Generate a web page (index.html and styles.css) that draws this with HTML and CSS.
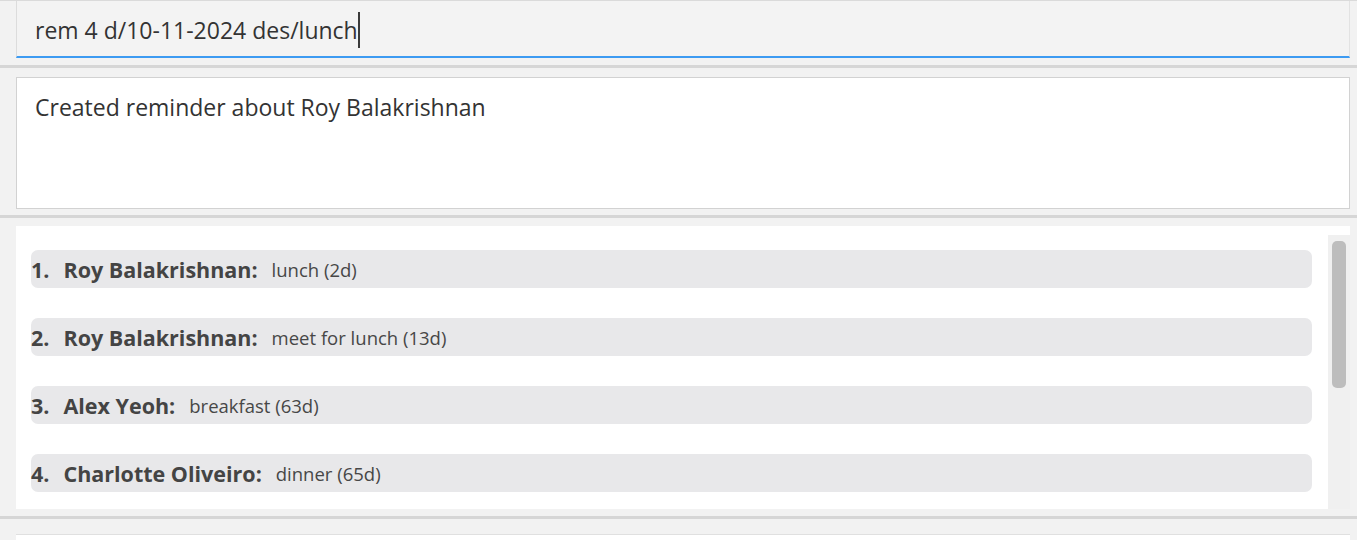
FILE: index.html
```html
<!DOCTYPE html>
<html>
<head>
<meta charset="utf-8">
<link rel="stylesheet" href="styles.css">
</head>
<body>
<div class="app">
  <div class="pane pane-command">
    <div class="command-box"><span class="command-text">rem 4 d/10-11-2024 des/lunch</span><span class="caret"></span></div>
  </div>
  <div class="divider"></div>
  <div class="pane pane-result">
    <div class="result-box">Created reminder about Roy Balakrishnan</div>
  </div>
  <div class="divider"></div>
  <div class="pane pane-list">
    <div class="list-panel">
      <div class="list-items">
        <div class="item"><span class="idx">1.</span><span class="name">Roy Balakrishnan:</span><span class="desc">lunch (2d)</span></div>
        <div class="item"><span class="idx">2.</span><span class="name">Roy Balakrishnan:</span><span class="desc">meet for lunch (13d)</span></div>
        <div class="item"><span class="idx">3.</span><span class="name">Alex Yeoh:</span><span class="desc">breakfast (63d)</span></div>
        <div class="item"><span class="idx">4.</span><span class="name">Charlotte Oliveiro:</span><span class="desc">dinner (65d)</span></div>
      </div>
      <div class="scrollbar"><div class="thumb"></div></div>
    </div>
  </div>
  <div class="divider"></div>
  <div class="pane pane-bottom">
    <div class="bottom-box"></div>
  </div>
</div>
</body>
</html>
```
FILE: styles.css
```css
html, body {
  margin: 0;
  padding: 0;
  background: #f2f2f2;
  height: 540px;
  overflow: hidden;
}
.app {
  display: flex;
  flex-direction: column;
  font-family: "Open Sans", "Noto Sans", sans-serif;
  border-top: 1px solid #dadada;
  height: 539px;
  overflow: hidden;
}
.pane {
  padding: 0 7px 0 16px;
}
.command-box {
  height: 53px;
  background: #f3f3f3;
  border-left: 1px solid #dcdcdc;
  border-right: 1px solid #e2e2e2;
  border-bottom: 2px solid #3d9bf2;
  display: flex;
  align-items: center;
  padding-left: 18px;
  padding-top: 2px;
  font-size: 23px;
  color: #333;
}
.caret {
  display: inline-block;
  width: 2px;
  height: 36px;
  background: #3a3a3a;
}
.pane-command { padding-bottom: 7px; }
.divider {
  height: 3px;
  background: #d6d6d6;
  flex: none;
}
.pane-result { padding-top: 9px; padding-bottom: 6px; }
.result-box {
  background: #fff;
  border: 1px solid #d2d2d2;
  padding: 14px 18px;
  box-sizing: border-box;
  height: 132px;
  font-size: 23px;
  color: #333;
  line-height: 30px;
}
.pane-list { padding-top: 8px; padding-bottom: 7px; }
.list-panel {
  background: #fff;
  height: 283px;
  display: flex;
  padding-left: 15px;
  box-sizing: border-box;
}
.list-items {
  flex: 1;
  display: flex;
  flex-direction: column;
  gap: 30px;
  padding-top: 24px;
  padding-right: 16px;
}
.item {
  height: 38px;
  flex: none;
  background: #e8e8ea;
  border-radius: 7px;
  display: flex;
  align-items: center;
  color: #444;
}
.idx {
  font-weight: 700;
  font-size: 21.5px;
  margin-right: 14px;
}
.name {
  font-weight: 700;
  font-size: 21.5px;
  margin-right: 14px;
}
.desc {
  font-size: 18.5px;
  color: #474747;
}
.scrollbar {
  width: 22px;
  margin-top: 9px;
  background: #f0f0f0;
  padding: 6px 4px 0 4px;
  box-sizing: border-box;
}
.thumb {
  width: 14px;
  height: 147px;
  background: #bdbdbd;
  border-radius: 5px;
}
.pane-bottom { padding-top: 15px; }
.bottom-box {
  height: 40px;
  background: #fff;
  border-top: 1px solid #e0e0e0;
}
```
